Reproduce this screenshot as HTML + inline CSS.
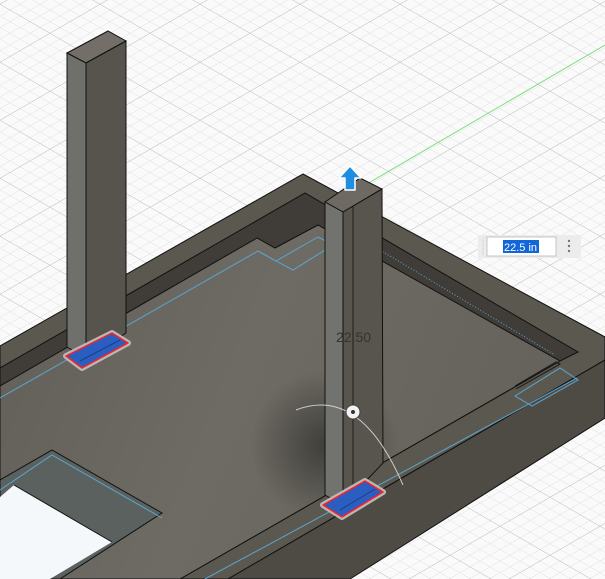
<!DOCTYPE html>
<html><head><style>
html,body{margin:0;padding:0;background:#fafafa;width:605px;height:579px;overflow:hidden}
svg{display:block}
</style></head><body>
<svg width="605" height="579" viewBox="0 0 605 579" xmlns="http://www.w3.org/2000/svg">
<defs>
<pattern id="gm" width="10" height="10" patternUnits="userSpaceOnUse" patternTransform="matrix(1,0.58,-1,0.58,0,4)">
<path d="M0,0H10M0,0V10" stroke="#dedede" stroke-width="0.9" fill="none"/>
</pattern>
<pattern id="gM" width="50" height="50" patternUnits="userSpaceOnUse" patternTransform="matrix(1,0.58,-1,0.58,0,4)">
<path d="M0,0H50M0,0V50" stroke="#bdbdbd" stroke-width="0.9" fill="none"/>
</pattern>
<radialGradient id="sh" cx="325" cy="445" r="75" gradientUnits="userSpaceOnUse">
<stop offset="0" stop-color="#000" stop-opacity="0.4"/>
<stop offset="1" stop-color="#000" stop-opacity="0"/>
</radialGradient>
<linearGradient id="fl" x1="0" y1="250" x2="500" y2="450" gradientUnits="userSpaceOnUse">
<stop offset="0" stop-color="#625f58"/>
<stop offset="0.5" stop-color="#6e6b64"/>
<stop offset="1" stop-color="#66635c"/>
</linearGradient>
<clipPath id="fc"><polygon points="0,386 257,238 275,248 318,225 560,360 180,579 0,579"/></clipPath>
</defs>
<rect width="605" height="579" fill="#fafafa"/>
<rect width="605" height="579" fill="url(#gm)"/>
<rect width="605" height="579" fill="url(#gM)"/>
<line x1="360" y1="188" x2="605" y2="45" stroke="#7fe07f" stroke-width="1"/>

<!-- rim top -->
<polygon points="0,346 303,174 605,337 605,360 228,579 0,579" fill="#5b5850" stroke="#111" stroke-width="1"/>
<!-- inner walls -->
<polygon points="0,368 305,193 578,352 560,361 180,579 0,579" fill="#403d38" stroke="#111" stroke-width="1"/>
<!-- floor -->
<polygon points="0,386 257,238 275,248 318,225 560,361 180,579 0,579" fill="url(#fl)" stroke="#111" stroke-width="1"/>
<rect width="605" height="579" fill="url(#sh)" clip-path="url(#fc)"/>
<polyline points="515,386 556,362 560,364 516,389" fill="none" stroke="#1a1917" stroke-width="1"/>
<!-- front outer face -->
<polygon points="605,360 605,418 350,579 228,579" fill="#4e4b45" stroke="#111" stroke-width="1"/>

<!-- hole -->
<polygon points="0,480 52,450 162,513 60,579 0,579" fill="#5b615e" stroke="#111" stroke-width="1"/>
<polygon points="0,497 14,485 112,542 50,579 0,579" fill="#f4f8fb"/>
<line x1="14" y1="485" x2="112" y2="542" stroke="#111"/>

<!-- blue lines -->
<g stroke="#5aa6cf" stroke-width="1" fill="none">
<polyline points="0,398 258,251 276,261 318,237"/>
<polyline points="258,251 276,261 293,270 333,245 318,237"/>
<polyline points="0,490 52,455 162,518"/>
<polyline points="205,579 577,378"/>
<polygon points="515,396 560,368 578,380 532,406"/>
<line x1="380" y1="250" x2="555" y2="355" stroke-dasharray="1,2"/>
</g>

<!-- left post -->
<polygon points="67,53 108,31 126,41 86,63" fill="#736f68" stroke="#111"/>
<polygon points="67,53 86,63 86,358 67,347" fill="#6f706b" stroke="#111"/>
<polygon points="86,63 126,41 126,333 86,358" fill="#57544d" stroke="#111"/>

<!-- right post -->
<polygon points="325,202 360,178 382,189 343,212" fill="#6e6a63" stroke="#111"/>
<polygon points="325,202 343,212 343,505 325,495" fill="#72736f" stroke="#111"/>
<polygon points="343,212 382,189 383,463 343,505" fill="#58554e" stroke="#111"/>
<line x1="353" y1="206" x2="353" y2="498" stroke="#111" stroke-width="0.8"/>

<!-- pads -->
<g stroke-linejoin="round">
<polygon points="66,356 112,333 128,343 82,368" fill="none" stroke="#b8b8b8" stroke-width="6"/>
<polygon points="66,356 112,333 128,343 82,368" fill="#2a5ec0" stroke="#ff2020" stroke-width="1.5"/>
<line x1="80" y1="361" x2="120" y2="340" stroke="#1a3f8a"/>
<polygon points="323,505 365,481 383,492 342,517" fill="none" stroke="#b8b8b8" stroke-width="6"/>
<polygon points="323,505 365,481 383,492 342,517" fill="#2a5ec0" stroke="#ff2020" stroke-width="1.5"/>
<line x1="340" y1="510" x2="375" y2="489" stroke="#1a3f8a"/>
</g>

<!-- dimension -->
<path d="M296,410 Q360,385 403,485" stroke="#e8e8e8" stroke-width="1" fill="none" opacity="0.8"/>
<text x="336" y="342" font-family="Liberation Sans, sans-serif" font-size="14" fill="#35342f">22.50</text>
<circle cx="353" cy="412" r="7" fill="#f2f2f2" stroke="#444" stroke-width="1"/>
<circle cx="353" cy="412" r="2" fill="#333"/>

<!-- arrow -->
<path d="M350,166 L361,178 L355,178 L355,190 L345,190 L345,178 L339,178 Z" fill="#1f8ee0" stroke="#fff" stroke-width="1.5" stroke-linejoin="round"/>

<!-- input -->
<rect x="478" y="235" width="103" height="23" fill="#ececec"/>
<line x1="483" y1="238" x2="483" y2="255" stroke="#c8c8c8" stroke-dasharray="1,1"/>
<rect x="487" y="237" width="69" height="19" fill="#fff" stroke="#c4c4c4"/>
<rect x="503" y="240" width="36" height="13" fill="#1166d8"/>
<text x="504" y="251" font-family="Liberation Sans, sans-serif" font-size="11" fill="#fff">22.5 in</text>
<circle cx="569" cy="241" r="1.2" fill="#777"/>
<circle cx="569" cy="246" r="1.2" fill="#777"/>
<circle cx="569" cy="251" r="1.2" fill="#777"/>
</svg>
</body></html>
